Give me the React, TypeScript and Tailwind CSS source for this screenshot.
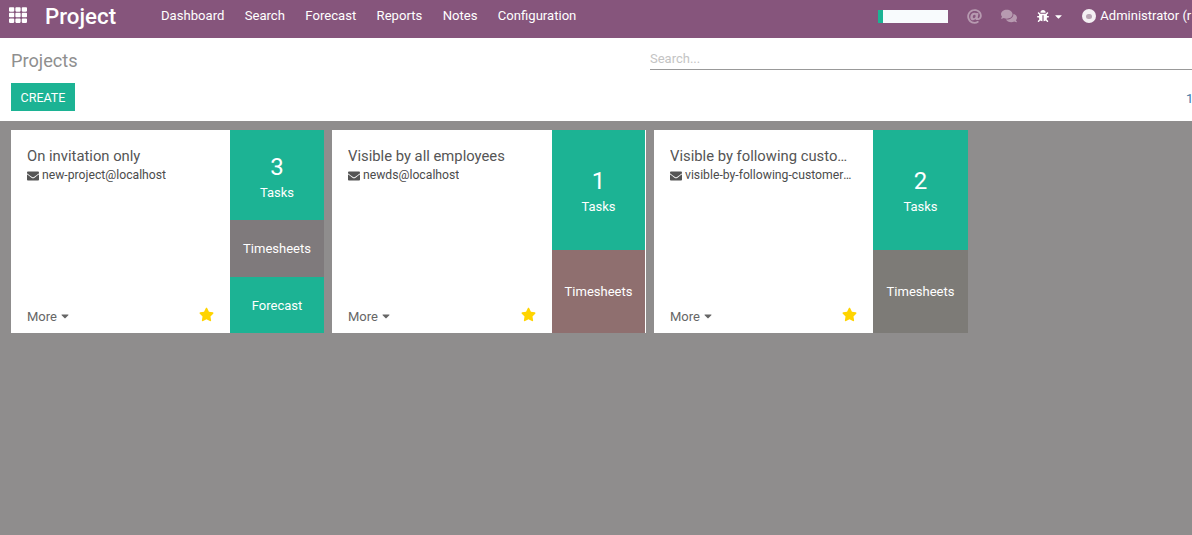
import React from "react";
import { FaTh, FaEnvelope, FaStar, FaCaretDown, FaBug, FaComments, FaAt } from "react-icons/fa";

type Tile = { label: string; count?: string; h: string; bg: string; pad: string };
type Card = { title: string; mail: string; tiles: Tile[]; w: string; side: string };

const cards: Card[] = [
  {
    title: "On invitation only",
    mail: "new-project@localhost",
    w: "w-[219px]",
    side: "w-[94px]",
    tiles: [
      { label: "Tasks", count: "3", h: "h-[90px]", bg: "bg-[#1cb394]", pad: "pt-[4px]" },
      { label: "Timesheets", h: "h-[57px]", bg: "bg-[#7f7a7c]", pad: "pt-0" },
      { label: "Forecast", h: "h-[56px]", bg: "bg-[#1cb394]", pad: "pt-[2px]" },
    ],
  },
  {
    title: "Visible by all employees",
    mail: "newds@localhost",
    w: "w-[220px]",
    side: "w-[94px] border-r border-white",
    tiles: [
      { label: "Tasks", count: "1", h: "h-[120px]", bg: "bg-[#1cb394]", pad: "pt-[2px]" },
      { label: "Timesheets", h: "h-[83px]", bg: "bg-[#8f6f6f]", pad: "pt-0" },
    ],
  },
  {
    title: "Visible by following customers",
    mail: "visible-by-following-customers@localhost",
    w: "w-[219px]",
    side: "w-[95px]",
    tiles: [
      { label: "Tasks", count: "2", h: "h-[120px]", bg: "bg-[#1cb394]", pad: "pt-[2px]" },
      { label: "Timesheets", h: "h-[83px]", bg: "bg-[#7d7b77]", pad: "pt-0" },
    ],
  },
];

const nav = ["Dashboard", "Search", "Forecast", "Reports", "Notes", "Configuration"];

export default function App() {
  return (
    <div className="w-[1192px] h-[535px] overflow-hidden bg-[#8f8d8d] font-['Roboto',sans-serif] text-[13px] text-[#4c4c4c]">
      <header className="h-[38px] pb-[6px] bg-[#86557c] flex items-center text-white whitespace-nowrap overflow-hidden">
        <FaTh className="ml-[9px] w-[18px] h-[18px] -mt-[2px] shrink-0" />
        <span className="ml-[18px] text-[22.3px] font-medium leading-none w-[71px] shrink-0">Project</span>
        <nav className="ml-[45px] flex gap-[20.4px] text-[13.1px] shrink-0">
          {nav.map((n) => (
            <span key={n}>{n}</span>
          ))}
        </nav>
        <div className="ml-[302px] w-[70px] h-[13px] bg-[#f8fbfd] shrink-0">
          <div className="w-[5px] h-full bg-[#1cb394]" />
        </div>
        <FaAt className="ml-[19px] w-[15px] h-[15px] text-[#b79ab0] shrink-0" />
        <FaComments className="ml-[19px] w-[16px] h-[16px] text-[#b79ab0] shrink-0" />
        <FaBug className="ml-[20px] w-[12px] h-[12px] shrink-0" />
        <FaCaretDown className="ml-[4px] w-[11px] h-[11px] shrink-0" />
        <span className="ml-[18px] w-[14px] h-[14px] rounded-full bg-[#f4f0f3] shrink-0 flex items-center justify-center">
          <span className="w-[6px] h-[5px] rounded-full bg-[#b9a6b4]" />
        </span>
        <span className="ml-[4px] shrink-0">Administrator (r</span>
      </header>

      <section className="h-[83px] bg-white pl-[11px] overflow-hidden">
        <div className="flex h-[45px]">
          <h1 className="w-[639px] pt-[12px] text-[18.2px] leading-[22px] text-[#8f8f8f] shrink-0">Projects</h1>
          <div className="flex-1 mt-[12px] h-[20px] border-b border-[#999] text-[#c4c4c4] leading-[17px]">Search...</div>
        </div>
        <div className="flex justify-between">
          <button className="w-[64px] h-[28px] pt-[2px] bg-[#1cb394] text-white text-[12.5px]">CREATE</button>
          <span className="mt-[6px] w-[6px] overflow-hidden text-[#3f79a8]">1</span>
        </div>
      </section>

      <main className="flex gap-[8px] pl-[11px] pt-[9px]">
        {cards.map((c) => (
          <article key={c.title} className="flex h-[203px]">
            <div className={`${c.w} bg-white pt-[17px] pl-[16px] pr-[21px] pb-[7px] flex flex-col`}>
              <h2 className="text-[14.8px] leading-[18px] truncate text-[#555]">{c.title}</h2>
              <p className="mt-[2px] flex items-center gap-[3px] text-[12.2px] leading-[17px] min-w-0">
                <FaEnvelope className="w-[12px] h-[12px] shrink-0 text-[#555]" />
                <span className="truncate">{c.mail}</span>
              </p>
              <div className="mt-auto -mr-[5px] flex items-center justify-between">
                <span className="flex items-center gap-[2px] text-[#666]">
                  More <FaCaretDown className="w-[12px] h-[12px]" />
                </span>
                <FaStar className="w-[15px] h-[15px] text-[#ffd400] -mt-[3px]" />
              </div>
            </div>
            <div className={`${c.side} flex flex-col text-white`}>
              {c.tiles.map((t) => (
                <div key={t.label} className={`${t.h} ${t.bg} ${t.pad} flex flex-col items-center justify-center`}>
                  {t.count && <span className="text-[24px] leading-[28px]">{t.count}</span>}
                  <span className={t.count ? "mt-[4px] leading-[16px]" : "leading-[16px]"}>{t.label}</span>
                </div>
              ))}
            </div>
          </article>
        ))}
      </main>
    </div>
  );
}
